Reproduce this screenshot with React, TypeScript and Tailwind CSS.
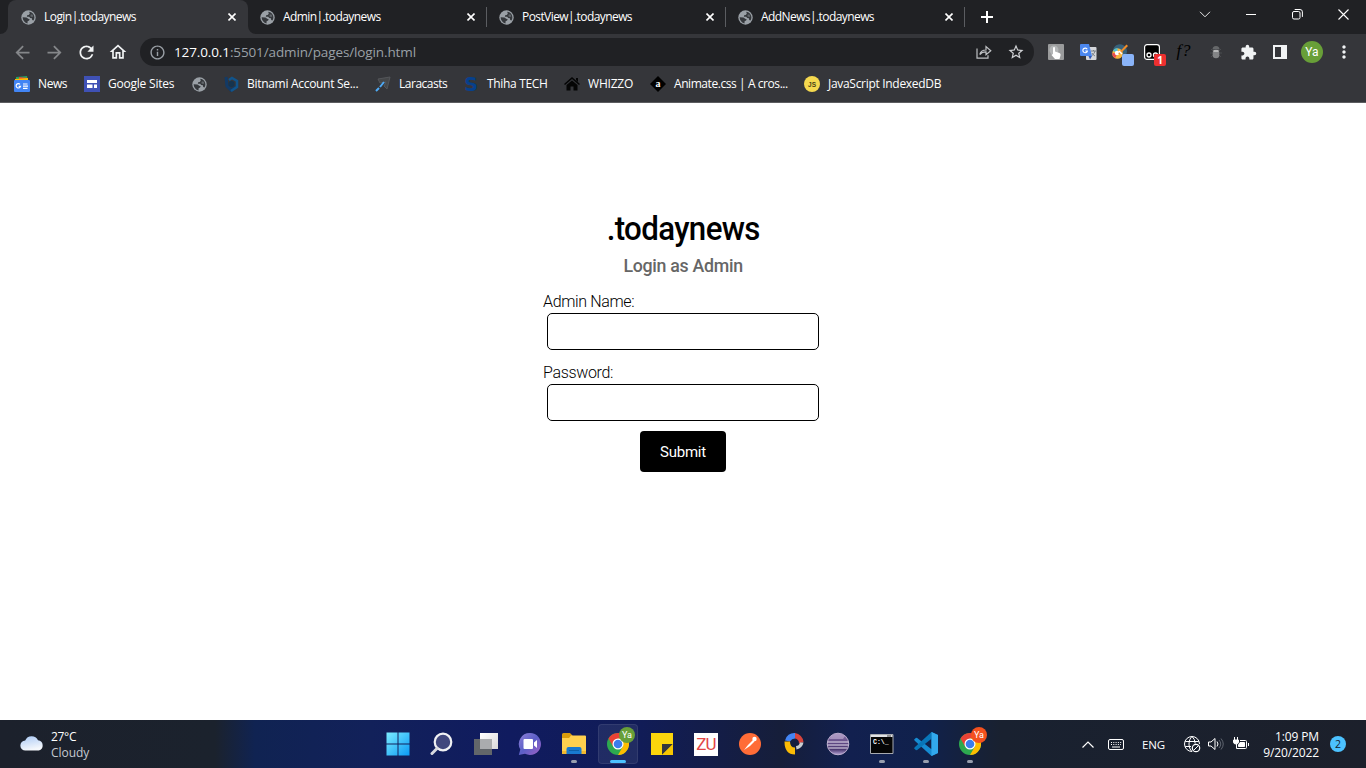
import type { ReactNode } from "react";
import {
  MdArrowBack, MdArrowForward, MdExtension, MdInfoOutline, MdMoreVert,
  MdOutlineHome, MdRefresh, MdStarBorder,
} from "react-icons/md";

type Bookmark = { icon: ReactNode; label?: string; box: string; text?: string };

const tabs = [
  { title: "Login|.todaynews", tracking: "tracking-[-0.55px]" },
  { title: "Admin|.todaynews", tracking: "tracking-[-0.58px]" },
  { title: "PostView|.todaynews", tracking: "tracking-[-0.58px]" },
  { title: "AddNews|.todaynews", tracking: "tracking-[-0.58px]" },
];

function Cross() {
  return (
    <svg width="8" height="8" viewBox="0 0 8 8" stroke="#fff" strokeWidth="1.6">
      <path d="M.5.5l7 7M7.5.5l-7 7" />
    </svg>
  );
}

function Globe() {
  return (
    <svg width="15" height="15" viewBox="0 0 15 15">
      <circle cx="7.5" cy="7.500" r="7.200" fill="#9aa0a6" />
      <path d="M1.600 7.200l3.900.2 1.700 1.300 1.500.5-.6 1.300-1.500.7-.1 2.300C3.800 12.800 1.700 10.500 1.600 7.200z" fill="#35383c" />
      <path d="M8.200 1.700c3 .3 5.200 2.700 5.200 5.700 0 1.300-.4 2.300-1 3.200l-1.200-.5-.3-1.900-1.700-.2-1-1.200-2.300-.1.200-1.500 1.600-.3 1.100-1.200z" fill="#35383c" />
      <path d="M9.500 4.800l1.600-.6 1.300 1.800-1.100 1-1.800-.4z" fill="#9aa0a6" opacity=".45" />
    </svg>
  );
}

function TabStrip() {
  return (
    <div className="flex h-[34px] bg-[#202124] pl-2">
      {tabs.map((tab, i) => (
        <div
          key={tab.title}
          className={
            i === 0
              ? "relative flex w-[240px] items-center rounded-t-lg bg-[#35363a] pl-[13px]"
              : "relative flex w-[239px] items-center pl-[12px]"
          }
        >
          {i === 0 && (
            <>
              <svg className="absolute bottom-0 -left-2" width="8" height="8"><path d="M8 0v8H0a8 8 0 0 0 8-8z" fill="#35363a" /></svg>
              <svg className="absolute -right-2 bottom-0" width="8" height="8"><path d="M0 0v8h8a8 8 0 0 1-8-8z" fill="#35363a" /></svg>
            </>
          )}
          <Globe />
          <span className={`ml-2 text-[12px] leading-4 text-white ${tab.tracking}`}>{tab.title}</span>
          <div className="mr-[12px] ml-auto"><Cross /></div>
          {i > 0 && <div className="absolute top-[7px] right-0 h-5 w-px bg-[#5b5d61]" />}
        </div>
      ))}
      <svg className="mt-[11px] ml-[16px]" width="12" height="12" stroke="#fff" strokeWidth="2"><path d="M6 0v12M0 6h12" /></svg>
      <div className="ml-auto flex h-7 items-center">
        <div className="flex w-[46px] justify-center">
          <svg width="12" height="7" fill="none" stroke="#e8e8e8"><path d="M1 .8l5 5 5-5" /></svg>
        </div>
        <div className="flex w-[46px] justify-center"><div className="h-px w-[10px] bg-white" /></div>
        <div className="flex w-[46px] justify-center">
          <svg width="11" height="11" fill="none" stroke="#fff"><rect x=".5" y="2.5" width="7.5" height="7.5" rx="1.5" /><path d="M2.7.5h5.3a2.4 2.4 0 0 1 2.4 2.4v5" /></svg>
        </div>
        <div className="flex w-[46px] justify-center">
          <svg width="11" height="11" stroke="#fff" strokeWidth="1.1"><path d="M.5.5l10 10M10.5.5l-10 10" /></svg>
        </div>
      </div>
    </div>
  );
}

function Cell({ children }: { children: ReactNode }) {
  return <div className="relative flex h-7 w-8 shrink-0 items-center justify-center">{children}</div>;
}

function Toolbar() {
  return (
    <div className="flex h-8 bg-[#35363a] px-[6px] pt-1">
      <Cell><MdArrowBack size={21} color="#85878a" /></Cell>
      <Cell><MdArrowForward size={21} color="#85878a" /></Cell>
      <Cell><MdRefresh size={21} color="#f1f3f4" /></Cell>
      <Cell><MdOutlineHome size={20} color="#f1f3f4" /></Cell>
      <div className="ml-[6px] flex h-7 w-[894px] items-center rounded-full bg-[#202124] pr-[2px] pl-[9px]">
        <MdInfoOutline size={17} color="#9aa0a6" />
        <span className="ml-2 text-[13.5px] leading-5 tracking-[-0.12px] text-[#9aa0a6]"><span className="text-white">127.0.0.1</span>:5501/admin/pages/login.html</span>
        <div className="ml-auto flex">
          <Cell>
            <svg width="16" height="14" viewBox="0 0 16 14" fill="none" stroke="#bfc1c4" strokeWidth="1.2"><path d="M1 3.500v9.700h11V10.200M3.800 9.500c.7-3 2.700-4.500 6.200-4.500V1.600l4.800 4.200-4.800 4V6.900c-2.800 0-4.700.8-6.200 2.600z" /></svg>
          </Cell>
          <Cell><MdStarBorder size={18} color="#d0d2d5" /></Cell>
        </div>
      </div>
      <div className="ml-[6px] flex">
        <Cell>
          <svg width="16" height="16"><rect width="16" height="16" rx="1" fill="#9a9b9c" /><circle cx="6" cy="6" r="4.500" fill="#b4b6b7" /><path d="M5 3.500q1.200-1 2 0v4l4.500 1.500q1.500.5 1 2.500l-1 3.500H7L3.500 11l.8-1 .7.500z" fill="#fff" /></svg>
        </Cell>
        <Cell>
          <svg width="17" height="16"><rect x="6" y="3" width="10.500" height="13" rx="1" fill="#d5d7db" /><path d="M1 0h8l3 12H1a1 1 0 0 1-1-1V1a1 1 0 0 1 1-1z" fill="#4b87ef" /><path d="M8.500 12h3.500l-2 3.500z" fill="#2f57b8" /><path d="M7.200 5.300a2.300 2.300 0 1 0 .2 1.700H5.300" fill="none" stroke="#fff" strokeWidth="1.100" /><path d="M11 7h5M13.500 6v1M15 7q-.5 3-3 4.500M12 9q1 2 3 3" fill="none" stroke="#727981" strokeWidth=".9" /></svg>
        </Cell>
        <Cell>
          <svg width="16" height="16"><path d="M1 8a7 7 0 1 1 11 5z" fill="#37627c" /><circle cx="5.500" cy="9.500" r="5.300" fill="#f6b53c" /><path d="M1 7a5.300 5.300 0 0 1 4.500-3L5.500 9z" fill="#49c0d5" /><path d="M.3 9l5.200.5L3 14.300A5.300 5.300 0 0 1 .3 9z" fill="#e84b50" /><circle cx="5" cy="9" r="2.200" fill="#fff" /><path d="M6 9.500L14.500.5 16 2 8 10z" fill="#f28c28" /><path d="M7 7l3 3" stroke="#fff" strokeWidth="1.500" /></svg>
          <div className="absolute top-4 left-[18px] size-3 rounded-[2px] bg-[#8ab4f8]" />
        </Cell>
        <Cell>
          <svg width="16" height="16"><rect x=".6" y=".6" width="14.800" height="14.800" rx="2.500" fill="#000" stroke="#fff" strokeWidth="1.200" /><g fill="none" stroke="#fff" strokeWidth="1.300"><circle cx="5" cy="11" r="2" /><circle cx="11.500" cy="11" r="2" /></g></svg>
          <div className="absolute top-4 left-[18px] flex size-3 items-center justify-center rounded-[2px] bg-[#ee3030] text-[10px] leading-3 font-bold text-white">1</div>
        </Cell>
        <Cell><span className="mb-[3px] font-['Liberation_Serif',serif] text-[17px] leading-4 tracking-[0.8px] text-black italic">f?</span></Cell>
        <Cell>
          <svg width="14" height="14"><path d="M2 4l2 2M12 4l-2 2M1 8h3M13 8h-3M2 12l2-2M12 12l-2-2" stroke="#4b4c4f" /><path d="M3.500 4.500a3.500 3.500 0 0 1 7 0z" fill="#66686a" /><rect x="3.700" y="4.800" width="6.600" height="8.500" rx="3.200" fill="#838486" /><path d="M4.500 5h5v2h-5z" fill="#b8b8b9" /></svg>
        </Cell>
        <Cell><MdExtension size={17} color="#f1f3f4" /></Cell>
        <Cell><svg width="14" height="14"><path fillRule="evenodd" d="M0 0h14v14H0zM2 2v10h6V2z" fill="#f1f3f4" /></svg></Cell>
        <Cell><div className="flex size-[22px] shrink-0 items-center justify-center rounded-full bg-[#689f38] font-[Roboto,sans-serif] text-[12px] leading-none text-white">Ya</div></Cell>
        <Cell><MdMoreVert size={20} color="#f1f3f4" /></Cell>
      </div>
    </div>
  );
}

const bookmarks: Bookmark[] = [
  {
    label: "News", box: "w-[70px]", text: "tracking-[-0.4px]",
    icon: <svg width="16" height="16"><path d="M2 1l11-1 1 5H2z" fill="#1fa463" /><path d="M5 1l9 1v4H5z" fill="#ea4335" /><path d="M1 3l13-1v4H1z" fill="#fbbc04" /><rect y="4" width="16" height="12" rx="1" fill="#4285f4" /><path d="M6 8.300a2.200 2.200 0 1 0 .5 2H4.700M9 8h4.500M9 10.200h5M9 12.300h4.500" fill="none" stroke="#fff" strokeWidth="1.200" /></svg>,
  },
  {
    label: "Google Sites", box: "w-[107px]", text: "tracking-[-0.22px]",
    icon: <svg width="16" height="16"><path d="M0 0h16v16H0z" fill="#3f51b5" /><path d="M3 4h10v3H3zM3 8.500h5.500V12H3zM10 8.500h3V12h-3z" fill="#fff" /></svg>,
  },
  { box: "w-[32px]", icon: <Globe /> },
  {
    label: "Bitnami Account Se...", box: "w-[152px]", text: "tracking-[-0.3px]",
    icon: <svg width="16" height="16"><path d="M3 1l1 9 4 4 5-3" fill="none" stroke="#123a66" strokeWidth="3" /><path d="M6 4l3-2 5 3v6l-6 4" fill="none" stroke="#11548b" strokeWidth="2.500" /><circle cx="8.500" cy="8" r="3" fill="#15344f" /></svg>,
  },
  {
    label: "Laracasts", box: "w-[88px]", text: "tracking-[-0.48px]",
    icon: <svg width="16" height="16" fill="none"><path d="M3 3l12-2-3 12-3-3 2-4-6 1z" fill="#454749" stroke="#54565a" /><path d="M1 15l3-3M5 11l4-5" stroke="#4eaaf5" strokeWidth="2" /></svg>,
  },
  {
    label: "Thiha TECH", box: "w-[101px]", text: "tracking-[-0.33px]",
    icon: <span className="flex w-4 justify-center font-['DejaVu_Sans',sans-serif] text-[19px] leading-4 font-bold text-[#07408c]">S</span>,
  },
  {
    label: "WHIZZO", box: "w-[86px]", text: "tracking-[-0.2px]",
    icon: <svg width="16" height="14"><path d="M8 0l8 7-1 1-7-6-7 6-1-1zM12 1h2v4l-2-2zM2.500 8L8 3.500 13.500 8v5.500h-4V9.500h-3v4h-4z" fill="#050505" /></svg>,
  },
  {
    label: "Animate.css | A cros...", box: "w-[154px]", text: "tracking-[-0.43px]",
    icon: <svg width="16" height="16"><path d="M8 0l8 8-8 8-8-8z" fill="#000" /><text x="8" y="11" textAnchor="middle" fill="#fff" fontFamily="Liberation Serif, serif" fontWeight="bold" fontSize="10">a</text></svg>,
  },
  {
    label: "JavaScript IndexedDB", box: "w-[140px]", text: "tracking-[-0.3px]",
    icon: <svg width="16" height="16"><circle cx="8" cy="8" r="8" fill="#f5d94f" /><text x="8" y="10.500" textAnchor="middle" fill="#473f17" fontFamily="Liberation Sans, sans-serif" fontWeight="bold" fontSize="6.500">JS</text></svg>,
  },
];

function BookmarksBar() {
  return (
    <div className="flex h-[37px] items-center border-b border-[#5c5d60] bg-[#35363a] pl-[14px]">
      {bookmarks.map((b, i) => (
        <div key={i} className={`flex shrink-0 items-center ${b.box}`}>
          <span className="flex w-4 shrink-0 justify-center">{b.icon}</span>
          {b.label && <span className={`ml-2 text-[12px] leading-4 whitespace-nowrap text-white ${b.text}`}>{b.label}</span>}
        </div>
      ))}
    </div>
  );
}

function Field({ label, type, tracking }: { label: string; type: string; tracking: string }) {
  return (
    <label className="block h-[71px]">
      <span className={`block h-[23px] text-[16px] leading-[23px] font-light ${tracking}`}>{label}</span>
      <input type={type} className="mx-1 block h-[37px] w-[272px] rounded-[5px] border border-black bg-white px-2 outline-none" />
    </label>
  );
}

function LoginPage() {
  return (
    <main className="flex flex-1 flex-col items-center bg-white pt-[104px] font-[Roboto,sans-serif] text-black">
      <h1 className="h-[42px] scale-x-[0.92] text-[34px] leading-[42px] font-medium tracking-[-0.7px]">.todaynews</h1>
      <h2 className="mt-1 h-[26px] scale-x-[0.96] text-[18.500px] leading-[26px] font-medium tracking-[-0.3px] text-[#666]">Login as Admin</h2>
      <form className="mt-[11px] flex w-[280px] flex-col">
        <Field label="Admin Name:" type="text" tracking="tracking-[-0.35px]" />
        <Field label="Password:" type="password" tracking="tracking-[-0.35px]" />
        <button type="button" className="-mt-[1px] h-[41px] w-[86px] self-center rounded-[4px] bg-black pt-[2px] text-[15px] tracking-[-0.25px] text-white">Submit</button>
      </form>
    </main>
  );
}

function Chrome({ badge }: { badge: string }) {
  return (
    <>
      <svg width="22" height="22" viewBox="0 0 22 22">
        <circle cx="11" cy="11" r="11" fill="#2da94f" />
        <path d="M1.470 5.500A11 11 0 0 1 20.530 5.500H11L6.240 13.750z" fill="#e94235" />
        <path d="M20.530 5.500A11 11 0 0 1 11 22l4.760-8.250L11 5.500z" fill="#fdbd00" />
        <circle cx="11" cy="11" r="5.500" fill="#fff" /><circle cx="11" cy="11" r="4.300" fill="#3b7ded" />
      </svg>
      <div className={`absolute top-[7px] right-[5px] flex size-[16px] items-center justify-center rounded-full font-[Roboto,sans-serif] text-[9px] leading-none text-white ${badge}`}>Ya</div>
    </>
  );
}

const apps: { icon: ReactNode; mark?: "active" | "open" }[] = [
  {
    icon: <svg width="24" height="24"><defs><linearGradient id="win" x2="1" y2="1"><stop stopColor="#7cecff" /><stop offset="1" stopColor="#0a9af5" /></linearGradient></defs><path d="M.5.5h11v11H.5zM12.500.5h11v11h-11zM.5 12.500h11v11H.5zM12.500 12.500h11v11h-11z" fill="url(#win)" /></svg>,
  },
  { icon: <svg width="24" height="24" fill="none" strokeLinecap="round"><circle cx="13" cy="10" r="8.300" fill="#40477d" stroke="#f0f1f4" strokeWidth="2.200" /><path d="M7 16.500l-5 5" stroke="#d7d9df" strokeWidth="3" /></svg> },
  { icon: <svg width="24" height="24"><defs><linearGradient id="tv" x2="1" y2="1"><stop stopColor="#fff" /><stop offset="1" stopColor="#d8d8da" /></linearGradient></defs><path d="M6 1h18v16H6z" fill="url(#tv)" /><path d="M0 7h18v16H0z" fill="#62666a" /><path d="M6 7h12v10H6z" fill="#aaacae" /></svg> },
  { icon: <svg width="24" height="24"><defs><linearGradient id="chat" x2="1" y2="1"><stop stopColor="#8f80d8" /><stop offset=".5" stopColor="#5b5fc7" /><stop offset="1" stopColor="#a060c5" /></linearGradient></defs><path d="M12 1a11 11 0 1 1-5 20.800L.8 23 2.300 17.500A11 11 0 0 1 12 1z" fill="url(#chat)" /><rect x="5.500" y="7" width="9.500" height="10" rx="1" fill="#fff" /><path d="M16 10.500L19 8v8l-3-2.500z" fill="#fff" /></svg> },
  {
    mark: "open",
    icon: <svg width="24" height="24"><path d="M0 2.500A1.500 1.500 0 0 1 1.500 1H8l2.500 2.500V8H0z" fill="#d99b0c" /><path d="M9 3.500h14a1 1 0 0 1 1 1V22H0V6h7z" fill="#ffd04e" /><path d="M0 19h24v3H0z" fill="#f3b92f" /><path d="M4.500 22v-5a2 2 0 0 1 2-2h11a2 2 0 0 1 2 2v5z" fill="#1879cf" /><path d="M7 18.500h10" stroke="#0d5fa8" /></svg>,
  },
  { mark: "active", icon: <Chrome badge="bg-[#689f38]" /> },
  { icon: <svg width="24" height="24"><path d="M1 1h22v22H1z" fill="#fbd50c" /><path d="M12 12h11L12 23z" fill="#35373d" /><path d="M23 12v11H12z" fill="#f7c600" /></svg> },
  { icon: <span className="flex h-[23px] w-[24px] items-center justify-center bg-white pt-px font-[Roboto,sans-serif] text-[17px] leading-none tracking-[-0.9px] text-[#e24646]">ZU</span> },
  { icon: <svg width="24" height="24"><circle cx="12" cy="12" r="11" fill="#ff6c37" /><path d="M6 18l4-5 5-5 1.500 1.500L12 14z" fill="#fff" /><circle cx="16.500" cy="7" r="2.200" fill="#fff" /></svg> },
  { icon: <svg width="24" height="24"><path d="M3 8.500A9.500 9.500 0 0 1 13 1v5.500a6 6 0 0 0-5 3z" fill="#4385f4" /><path d="M13 1a10 10 0 0 1 8.500 9l-4.500 1.500a5 5 0 0 0-4-5z" fill="#d7443c" /><path d="M21.500 10.500q-1 5.500-7 7l-.5-3.500q3 0 4-3.500z" fill="#c9cdd1" /><path d="M2.500 9.500H8q0 6 5 6V22.500q-10.500 0-10.500-13z" fill="#fbbc05" /></svg> },
  { icon: <svg width="24" height="24"><defs><linearGradient id="ecl" x2="0" y2="1"><stop stopColor="#8d76ab" /><stop offset=".5" stopColor="#5b4580" /><stop offset=".75" stopColor="#4a3770" /><stop offset="1" stopColor="#b9a5d6" /></linearGradient></defs><circle cx="12" cy="12" r="10.800" fill="url(#ecl)" stroke="#c3b4d3" strokeWidth=".9" /><path d="M1.500 10h21M1.500 13h21M2.500 16h19" stroke="#eae4f2" strokeWidth="1.200" /><path d="M5 4q7-5 14 0l-2 3H3.500z" fill="#c4b2d6" opacity=".6" /></svg> },
  { mark: "open", icon: <svg width="24" height="20"><path d="M.5.5h22.500v19H.5z" fill="#050505" stroke="#a7aab0" /><path d="M1 1h21.500v2H1z" fill="#e1e2e5" /><path d="M18 1v2M20 1v2" stroke="#444" /><text x="3" y="9.500" fill="#fff" fontFamily="Liberation Mono, monospace" fontWeight="bold" fontSize="6.500">C:\_</text></svg> },
  { mark: "open", icon: <svg width="24" height="24" viewBox="0 0 24 24"><path d="M17.500 0L24 3v18l-6.500 3L1 9l-1-1.200 2-2 1.200.1 14.300 11.300z" fill="#168bd2" /><path d="M17.500 0v6.800L3.200 18.100l-1.200.1-2-2L1 15z" fill="#0876b9" /><path d="M17.500 0L24 3v18l-6.500 3z" fill="#32a9ed" /></svg> },
  { mark: "open", icon: <Chrome badge="bg-[#f4511e]" /> },
];

function Taskbar() {
  return (
    <footer className="flex h-12 bg-[linear-gradient(90deg,#1c212c_0px,#1b222d_215px,#102352_255px,#12215a_370px,#101b5f_510px,#111c57_640px,#161e3a_780px,#12204f_850px,#10214c_925px,#192130_1000px,#1c202b_1366px)] text-white">
      <div className="flex w-[376px] items-center pl-5">
        <svg className="-mt-[2px]" width="24" height="16"><defs><linearGradient id="cloud" x2=".3" y2="1"><stop stopColor="#aac9f5" /><stop offset="1" stopColor="#f4f7fc" /></linearGradient></defs><path d="M5.500 15.500a5 5 0 0 1-.3-10A7 7 0 0 1 18 5.300a5.200 5.200 0 0 1 .8 10.200z" fill="url(#cloud)" /></svg>
        <div className="ml-[7px] pt-[2px] text-[12px] leading-4 tracking-[-0.3px]">
          <div>27°C</div>
          <div className="tracking-[-0.05px] text-[#c5c9d0]">Cloudy</div>
        </div>
      </div>
      <div className="flex">
        {apps.map((app, i) => (
          <div key={i} className="relative flex h-12 w-11 items-center justify-center">
            {app.mark === "active" && <div className="absolute inset-x-[2px] inset-y-1 rounded-[4px] border border-white/8 bg-white/7" />}
            <div className="relative flex h-12 w-11 items-center justify-center">{app.icon}</div>
            {app.mark && <div className={app.mark === "active" ? "absolute bottom-[5px] h-[3px] w-4 rounded-full bg-[#4cc2ff]" : "absolute bottom-[5px] h-[3px] w-[6px] rounded-full bg-[#989fae]"} />}
          </div>
        ))}
      </div>
      <div className="ml-auto flex items-center pr-5 text-[12px]">
        <svg width="12" height="7" fill="none" stroke="#fff" strokeWidth="1.200"><path d="M.5 6.500L6 1l5.500 5.500" /></svg>
        <svg className="ml-[14px]" width="16" height="11" fill="none" stroke="#fff"><rect x=".5" y=".5" width="15" height="10" rx="1.500" /><path d="M3 3.500h11M3 5.500h10" strokeDasharray="1 1.300" /><path d="M4 8h8" /></svg>
        <span className="ml-[18px] w-[25px] pt-px text-[11.500px] tracking-[-0.15px]">ENG</span>
        <svg className="ml-[17px]" width="17" height="17" fill="none" stroke="#fff"><path d="M15.500 8A7.500 7.500 0 1 0 8 15.500M8 .5C4 4 4 12 8 15.500M8 .5q3 2.500 3.200 7M1.200 5.500h13.600M1.200 10.500H7" /><circle cx="12" cy="12" r="3.700" strokeWidth="1.200" /><path d="M9.500 14.500l5-5" /></svg>
        <svg className="ml-[7px]" width="16" height="14" fill="none" stroke="#fff"><path d="M.5 5v4h2.500l4 3.500v-11L3 5zM9 4.500q2 2.500 0 5" /><path d="M11 3q3.500 4 0 8M13 1.500q4.500 5.500 0 11" stroke="#5f6570" /></svg>
        <svg className="ml-[9px] mb-px" width="16" height="14" fill="none" stroke="#fff"><path d="M1.500 0v3M4.500 0v3" /><path d="M.5 3h5v2q0 2-2.500 2T.5 5z" fill="#fff" /><path d="M3.500 7v4.500h9q1 0 1-1v-6q0-1-1-1H7" /><path d="M7 5.500h4.500v4H5.500V8z" fill="#fff" /><path d="M15.500 6v3" /></svg>
        <div className="ml-[12px] w-[58px] pt-px text-right text-[12px] leading-4 tracking-[-0.12px] whitespace-nowrap"><div>1:09 PM</div><div>9/20/2022</div></div>
        <div className="ml-[11px] flex size-4 items-center justify-center rounded-full bg-[#4cc2ff] text-[10.500px] leading-none text-[#15202c]">2</div>
      </div>
    </footer>
  );
}

export default function App() {
  return (
    <div className="flex h-[768px] w-[1366px] flex-col overflow-hidden font-['Open_Sans',sans-serif]">
      <TabStrip />
      <Toolbar />
      <BookmarksBar />
      <LoginPage />
      <Taskbar />
    </div>
  );
}
